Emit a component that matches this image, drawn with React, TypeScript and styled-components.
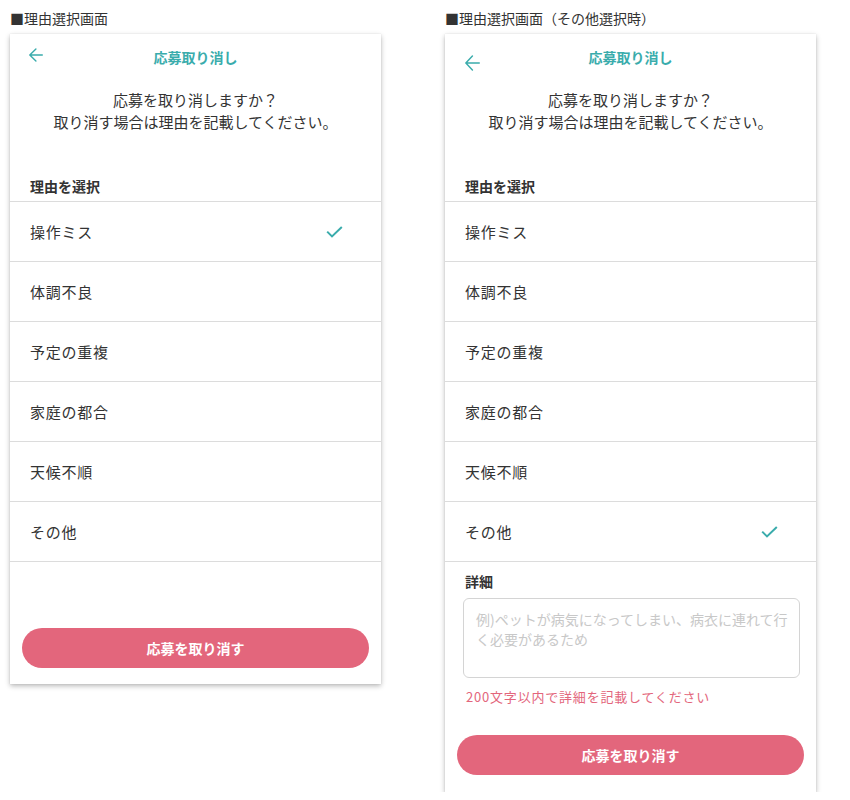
import React from "react";
import styled, { createGlobalStyle } from "styled-components";

const Global = createGlobalStyle`
  html, body { margin: 0; padding: 0; background: #fff; }
  body { font-family: "Noto Sans CJK JP", "Noto Sans", sans-serif; color: #333; }
  * { box-sizing: border-box; }
`;

const TEAL = "#3aacac";
const PINK = "#e3667c";

const Page = styled.div`
  display: flex;
  align-items: flex-start;
  gap: 64px;
  padding: 8px 0 0 10px;
`;

const Column = styled.div`
  display: flex;
  flex-direction: column;
  gap: 6px;
  width: 371px;
`;

const Caption = styled.div`
  font-size: 14px;
  line-height: 20px;
  color: #333;
  white-space: nowrap;
`;

const Panel = styled.div<{ $pb: number }>`
  background: #fff;
  display: flex;
  flex-direction: column;
  box-shadow: 0 2px 5px rgba(0, 0, 0, 0.28), 0 0 1px rgba(0, 0, 0, 0.12);
  padding-bottom: ${(p) => p.$pb}px;
`;

const Header = styled.div`
  display: grid;
  grid-template-columns: 60px 1fr 60px;
  height: 46px;
  align-items: center;
`;

const Back = styled.div<{ $top: number; $left: number }>`
  align-self: start;
  padding: ${(p) => p.$top}px 0 0 ${(p) => p.$left}px;
  display: flex;
  color: ${TEAL};
`;

const Title = styled.div`
  text-align: center;
  font-size: 14px;
  font-weight: 700;
  color: ${TEAL};
  line-height: 20px;
`;

const Message = styled.div`
  margin-top: 9px;
  text-align: center;
  font-size: 15px;
  line-height: 22px;
  color: #333;
`;

const Label = styled.div<{ $top: number; $bottom: number }>`
  margin-top: ${(p) => p.$top}px;
  margin-bottom: ${(p) => p.$bottom}px;
  padding-left: 20px;
  font-size: 14px;
  font-weight: 700;
  line-height: 20px;
  color: #333;
`;

const List = styled.div`
  border-top: 1px solid #dcdcdc;
`;

const Row = styled.div`
  height: 60px;
  display: flex;
  align-items: center;
  justify-content: space-between;
  padding: 0 38px 0 20px;
  border-bottom: 1px solid #dcdcdc;
  font-size: 15px;
  letter-spacing: 0.75px;
  color: #333;
`;

const Spacer = styled.div<{ $h: number }>`
  height: ${(p) => p.$h}px;
`;

const Button = styled.button`
  margin: 0 12px;
  height: 40px;
  border: none;
  border-radius: 20px;
  background: ${PINK};
  color: #fff;
  font-family: inherit;
  font-size: 14px;
  font-weight: 700;
`;

const TextArea = styled.textarea`
  margin: 0 16px 0 18px;
  height: 80px;
  border: 1px solid #d4d4d4;
  border-radius: 6px;
  padding: 10px 4px 10px 12px;
  font-family: inherit;
  font-size: 14px;
  line-height: 20px;
  resize: none;
  color: #333;
  &::placeholder { color: #c8c8c8; }
`;

const ErrorText = styled.div`
  margin-top: 10px;
  padding-left: 21px;
  font-size: 13px;
  letter-spacing: 0.8px;
  line-height: 18px;
  color: ${PINK};
`;

const Arrow = ({ w, h }: { w: number; h: number }) => (
  <svg width={w} height={h} viewBox="0 0 14 14" fill="none" preserveAspectRatio="none">
    <path d="M13.3 7H0.9M6.9 0.9L0.8 7l6.1 6.1" stroke="currentColor" strokeWidth="1.4" strokeLinecap="round" strokeLinejoin="round" />
  </svg>
);

const Check = () => (
  <svg width="17" height="12" viewBox="0 0 17 12" fill="none">
    <path d="M1.2 5.6l4.8 4.8L15.8 1" stroke={TEAL} strokeWidth="2" />
  </svg>
);

const reasons = ["操作ミス", "体調不良", "予定の重複", "家庭の都合", "天候不順", "その他"];

const Screen = ({ selected, other }: { selected: string; other?: boolean }) => (
  <Panel $pb={other ? 17 : 16}>
    <Header>
      <Back $top={other ? 21 : 14} $left={other ? 20 : 19}>
        {other ? <Arrow w={15} h={16} /> : <Arrow w={14} h={14} />}
      </Back>
      <Title>応募取り消し</Title>
      <div />
    </Header>
    <Message>
      応募を取り消しますか？
      <br />
      取り消す場合は理由を記載してください。
    </Message>
    <Label $top={43} $bottom={5}>理由を選択</Label>
    <List>
      {reasons.map((r) => (
        <Row key={r}>
          <span>{r}</span>
          {r === selected && <Check />}
        </Row>
      ))}
    </List>
    {other ? (
      <>
        <Label $top={9} $bottom={7}>詳細</Label>
        <TextArea placeholder="例)ペットが病気になってしまい、病衣に連れて行く必要があるため" />
        <ErrorText>200文字以内で詳細を記載してください</ErrorText>
        <Spacer $h={29} />
      </>
    ) : (
      <Spacer $h={66} />
    )}
    <Button>応募を取り消す</Button>
  </Panel>
);

export default function App() {
  return (
    <>
      <Global />
      <Page>
        <Column>
          <Caption>■理由選択画面</Caption>
          <Screen selected="操作ミス" />
        </Column>
        <Column>
          <Caption>■理由選択画面（その他選択時）</Caption>
          <Screen selected="その他" other />
        </Column>
      </Page>
    </>
  );
}
